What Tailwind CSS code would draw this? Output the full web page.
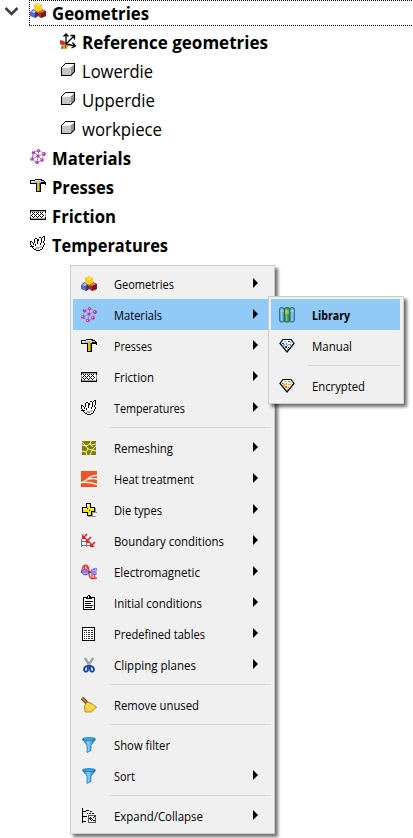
<!DOCTYPE html>
<html lang="en"><head><meta charset="utf-8"><title>Geometries</title>
<script src="https://cdn.jsdelivr.net/npm/@tailwindcss/browser@4"></script></head>
<body class="relative h-[838px] w-[413px] overflow-hidden bg-white font-['Open_Sans','Noto_Sans',sans-serif] text-black">
<svg class="absolute size-0">
<defs><linearGradient id="fg"><stop stop-color="#1277c5"/><stop offset=".45" stop-color="#7fd0ff"/><stop offset="1" stop-color="#075da8"/></linearGradient></defs>
<symbol id="geo" viewBox="0 0 16 16"><path d="M0 9l3-3 5 1v6l-3 2-5-2z" fill="#5968ce"/><path d="M1 9l3-2 3 1-3 2z" fill="#b5bff8"/><path d="M5 10l3-2v5l-3 2z" fill="#303779"/><path d="M8 8l4-2 4 2v5l-5 2-3-2z" fill="#b52a20"/><path d="M9 8l3-1 3 1-4 2z" fill="#ed8175"/><path d="M11 10l5-2v5l-5 2z" fill="#791b18"/><path d="M4 2l4-2 4 2v6L8 10 4 7z" fill="#f4bd12"/><path d="M5 2l3-1 3 1-3 2z" fill="#fff061"/><path d="M4 3l4 1 4-1v4L8 9 4 7z" fill="#ffcf20"/><path d="M4.500 7.500L8 9.500l4-2" fill="none" stroke="#906619"/></symbol>
<symbol id="mat" viewBox="0 0 16 16"><path d="M4 3l5-2 5 4-2 6-5 3-5-4zM4 3l4 4 6-2M8 7l-1 7M2 10l6-3 4 4M4 3l8 8M9 1L8 7M4 3L2 10" fill="none" stroke="#a294ab" stroke-width="1"/><g fill="#c72ccb"><circle cx="3.500" cy="3.500" r="1.700"/><circle cx="8.500" cy="1.700" r="1.600"/><circle cx="14" cy="5" r="1.900"/><circle cx="8" cy="7" r="1.600"/><circle cx="2" cy="10" r="1.800"/><circle cx="12" cy="11" r="1.800"/><circle cx="7" cy="13.500" r="1.800"/></g><path d="M3 2h1v1H3zM8 1h1v1H8zM13 4h1v1h-1zM1 9h1v1H1zM11 10h1v1h-1zM6 13h1v1H6z" fill="#f4a8f6"/></symbol>
<symbol id="press" viewBox="0 0 16 16" shape-rendering="crispEdges"><path d="M0 2h5V1h7v1h2v1h1v1h1v3h-1V6h-4v8H6V6H0z"/><path d="M1 3h4V2h6v1h3v1h-3v1H1z" fill="#b9bec2"/><path d="M5 2h5v1H5zM1 3h3v1H1z" fill="white"/><path d="M7 5h2v8H7z" fill="#e0c800"/><path d="M9 5h1v8H9z" fill="#8a7600"/></symbol>
<symbol id="fric" viewBox="0 0 16 16" shape-rendering="crispEdges"><path d="M0 3h16v10H0z" fill="#999"/><path d="M0 3h16v1H0zM0 12h16v1H0zM0 4h1v2H0zM15 4h1v2h-1zM0 10h1v2H0zM15 10h1v2h-1z"/><path d="M1 5h14v6H1z" fill="white"/><path d="M2 5h1v1H2zM4 5h1v1H4zM6 5h1v1H6zM8 5h1v1H8zM10 5h1v1h-1zM12 5h1v1h-1zM3 6h1v1H3zM7 6h1v1H7zM11 6h1v1h-1zM2 7h1v1H2zM4 7h1v1H4zM6 7h1v1H6zM8 7h1v1H8zM10 7h1v1h-1zM12 7h1v1h-1zM1 8h1v1H1zM5 8h1v1H5zM9 8h1v1H9zM13 8h1v1h-1zM2 9h1v1H2zM4 9h1v1H4zM6 9h1v1H6zM8 9h1v1H8zM10 9h1v1h-1zM12 9h1v1h-1zM3 10h1v1H3zM7 10h1v1H7zM11 10h1v1h-1z"/></symbol>
<symbol id="temp" viewBox="0 0 16 16" shape-rendering="crispEdges"><path d="M1 6h3V3h3l1 4 1-5h3V1h3v4l-1 5-2 3-4 2-4-2-3-4z" fill="white"/><path d="M0 5h2v1H0zM2 6h1v1H2zM0 6h1v3H0zM1 9h1v1H1zM3 7h1v2H3zM4 3h1v4H4zM5 2h2v1H5zM7 3h1v5H7zM8 3h1v2H8zM9 1h2v1H9zM11 2h1v5h-1zM10 7h1v2h-1zM12 1h1v1h-1zM13 0h2v1h-2zM14 1h1v4h-1zM13 5h1v2h-1zM14 7h1v2h-1zM13 9h1v2h-1zM12 11h1v2h-1zM10 13h2v1h-2zM6 14h4v1H6zM4 13h2v1H4zM2 11h1v1H2zM3 12h1v1H3zM0 10h4v1H0zM5 8h1v2H5z"/><path d="M6 11h5v1H6zM5 12h4v1H5zM10 10h2v1h-2z" fill="#aaa"/></symbol>
<symbol id="cube" viewBox="0 0 16 16" shape-rendering="crispEdges"><path d="M1 5l4-4h10v9l-4 4H1z" fill="#c5c5c5"/><path d="M2 5l4-3h8l-3 3z" fill="white"/><path d="M11 5l4-4v9l-4 4z" fill="#929292"/><path d="M1.500 5.500l4-4h9v8l-4 4h-9z" fill="none" stroke="#000"/><path d="M2 5h8" fill="none" stroke="#eee"/></symbol>
<symbol id="ref" viewBox="0 0 16 16"><path d="M0 7l4 1 4 5-2 3H1l1-4-2-1z" fill="#c93227"/><path d="M2 12l5-1v5H2z" fill="#d8ad17"/><path d="M2 13h1v2H2zM5 12h1v3H5z" fill="#7b4514"/><path d="M6 11V1M3.500 3.500L6 1l2.500 2.500M6 11l8-8M10.500 2.500h4v4M6 11l9 2M12.500 9.500l3 3.500-4 2" fill="none" stroke="#000" stroke-width="1.300"/></symbol>
<symbol id="remesh" viewBox="0 0 16 16"><path d="M1 1h14v14H1z" fill="#818000"/><path d="M1 5l4 1 4-2 1-3M1 2l4 4 2 3-2 3-4-1M5 12l1 3M7 9l4 1 4-4M9 4l3 3M11 10l4 1M11 10l-2 5M10 5l5-1" fill="none" stroke="#fff6c8" stroke-width="1"/></symbol>
<symbol id="heat" viewBox="0 0 16 16"><path d="M0 0h16v16H0z" fill="#ed5429"/><path d="M0 11.500C7 11 6 4 16 4.500M5 9q6-2 11-1M0 11.500q8-1 16 2" fill="none" stroke="#fff3ed" stroke-width="1.400"/></symbol>
<symbol id="die" viewBox="0 0 16 16" shape-rendering="crispEdges"><path d="M8 6h7v4h1v1h-4v3h3v1H7v-4h1z" fill="#999"/><path d="M5 1h5v4h4v5h-3v4H6v-3H1V5h4z"/><path d="M6 2h3v4h4v3h-3v4H7v-3H2V6h4z" fill="#f0e419"/><path d="M6 2h2v2H6zM2 6h4v1H2zM10 6h3v1h-3z" fill="#ffff85"/><path d="M6 6h1v1H6zM8 8h1v1H8z"/></symbol>
<symbol id="bound" viewBox="0 0 16 16"><path d="M.5 6v8M5.500 8v6M9.500 10v4M0 8.500h6M0 12.500h11" fill="none" stroke="#777"/><path d="M6 1L2 5M10 4L6 8M14 9l-4 4" stroke="#e51c23" stroke-width="1.600"/><path d="M1 1l5 5H1zM5 5l5 5H5zM9 9l5 5H9z" fill="#f21c24"/></symbol>
<symbol id="em" viewBox="0 0 16 16"><path d="M0 8V7q4-3 8 0v2q-4 4-8-1zM9 8q4-4 7-3v5q-4 0-7-2z" fill="#b8b7ff"/><path d="M0 8q3-4 7-1l3 2q3 2 6 1M0 8q4 5 8 1 3-5 8-4" fill="none" stroke="#1b1bef" stroke-dasharray="2 .5"/><path d="M1 7C1-1 8-1 8 8c0 8 3 7 8 6M3.500 2v4M6 2v4M11 10v4M13.500 10v4" fill="none" stroke="#f01f27" stroke-width="1.200"/><path d="M1 8h14" stroke="#303060" stroke-width=".7"/></symbol>
<symbol id="init" viewBox="0 0 16 16" shape-rendering="crispEdges"><path d="M2.500 2.500h11v12h-11z" fill="#f8f8f8" stroke="#000"/><path d="M5 2h1V1h1V0h2v1h1v1h1v2H5zM4 6h8v1H4zM4 8h6v1H4zM4 10h8v1H4zM4 12h7v1H4z"/><path d="M7 1h1v2H7z" fill="white"/></symbol>
<symbol id="table" viewBox="0 0 16 16" shape-rendering="crispEdges"><path d="M1.500 1.500h12v13h-12z" fill="white" stroke="#000"/><path d="M3 4.500h3M7 4.500h2M10 4.500h2M3 6.500h1M5 6.500h1M7 6.500h2M10 6.500h2M3 8.500h1M5 8.500h1M7 8.500h2M10 8.500h2M3 10.500h1M5 10.500h1M7 10.500h2M10 10.500h2M3 12.500h1M5 12.500h1M7 12.500h2M10 12.500h2" stroke="#333"/></symbol>
<symbol id="scis" viewBox="0 0 16 16"><path d="M4 1l5 8M12 1L7 9" stroke="#747c84" stroke-width="2"/><path d="M4 1l5 8M12 1L7 9" stroke="#c8d0d7" stroke-width=".7"/><path d="M7 9q-3 0-4 3c0 4 4 3 4 0zM9 9q3 0 4 3c0 4-4 3-4 0z" fill="none" stroke="#1746af" stroke-width="1.900"/></symbol>
<symbol id="broom" viewBox="0 0 16 16"><path d="M1 1l5 5" stroke="#7b431d" stroke-width="3.500"/><path d="M1 1l4 4" stroke="#cc8847" stroke-width="1.300"/><path d="M6 5l4 1 5.500 4-5 5H4L3.500 9z" fill="#f7cf34" stroke="#ad7a12" stroke-width=".8"/><path d="M6 6l4 4M5 8l4 5M8 13l5-4" stroke="#fff27b"/></symbol>
<symbol id="filter" viewBox="0 0 16 16"><path d="M1.500 2.500L6 8v7.500l4-2V8l4.500-5.500z" fill="url(#fg)" stroke="#176bac" stroke-width=".7"/><ellipse cx="8" cy="2" rx="6.500" ry="1.300" fill="#55aee8" stroke="#1478bf"/></symbol>
<symbol id="expand" viewBox="0 0 16 16" shape-rendering="crispEdges"><path d="M1 0h1v15H1zM2 3h3v1H2zM2 8h4v1H2zM2 13h3v1H2zM5 2h3v1H5zM9 3h2v1H9zM6 5h1v1H6zM8 5h2v1H8zM11 5h2v1h-2z"/><path d="M7.500 7.500h7v7h-7z" fill="#eee" stroke="#555"/><path d="M9 9h1v3H9zM8 10h3v1H8zM13 8h1v1h-1zM12 9h1v1h-1zM11 11h1v1h-1zM10 12h1v1h-1zM12 12h2v1h-2z"/></symbol>
<symbol id="lib" viewBox="0 0 16 16"><g stroke="#215f99"><rect x=".7" y=".7" width="4.300" height="14.300" rx="1.300" fill="#6fb7dc"/><rect x="11" y=".7" width="4.300" height="14.300" rx="1.300" fill="#6fb7dc"/><rect x="5.500" y=".7" width="5" height="14.300" rx="1" fill="#43945a" stroke="#28713f"/></g><path d="M2.500 3v10M13 3v10" stroke="#8fd0ec"/><path d="M7.500 2v12" stroke="#85c774" stroke-width="1.300"/><path d="M1 4h4M6 4h4M11 4h4M6 6h4" stroke="#d2d777"/></symbol>
<symbol id="gem" viewBox="0 0 16 16"><path d="M4 1.500h8l3 4-7 8.500-7-8.500z" fill="white" stroke="#000" stroke-width="1.200"/><g shape-rendering="crispEdges"><path d="M5 3h2v1H5zM9 6h3v1H9zM4 6h2v2H4zM8 10h1v2H8zM11 4h1v1h-1z" fill="#18cff8"/><path d="M9 3h2v1H9zM3 5h2v1H3zM6 8h2v2H6zM9 9h1v1H9z" fill="#2626d8"/><path d="M7 5h1v2H7zM11 7h1v1h-1zM8 7h1v1H8z" fill="#e72cd0"/><path d="M12 5h1v1h-1zM5 8h1v1H5zM9 8h1v1H9z" fill="#eddb22"/></g></symbol>
<symbol id="gem2" viewBox="0 0 16 16"><path d="M4 1.500h8l3 4-7 8.500-7-8.500z" fill="#fffaf0" stroke="#000" stroke-width="1.200"/><g shape-rendering="crispEdges"><path d="M5 3h2v1H5zM9 6h3v1H9zM4 6h2v2H4zM8 10h1v2H8zM11 4h1v1h-1z" fill="#f8a62a"/><path d="M9 3h2v1H9zM3 5h2v1H3zM6 8h2v2H6zM9 9h1v1H9zM7 5h1v2H7z" fill="#e75a36"/><path d="M12 5h1v1h-1zM5 8h1v1H5zM9 8h1v1H9z" fill="#f5ca3b"/></g></symbol>
<symbol id="arr" viewBox="0 0 5 10"><path d="M0 0l5 5-5 5z"/></symbol>
</svg>
<main id="tree" class="-mt-px flex flex-col"></main>
<nav id="menu" class="absolute left-[70px] top-[265px] h-[569px] w-[205px] border border-[#ccc] bg-[#f0f0f0] py-0.5 pl-0.5 pr-[3px] shadow-[3px_3px_3px_rgba(0,0,0,0.55)]"></nav>
<nav id="sub" class="absolute left-[268px] top-[296px] h-[108px] w-[136px] border border-[#ccc] bg-[#f0f0f0] py-0.5 pl-0.5 pr-[3px] shadow-[3px_3px_3px_rgba(0,0,0,0.55)]"></nav>
<script>
const icon=(n,c)=>`<svg class="size-4 shrink-0 ${c}"><use href="#${n}"/></svg>`;
const label=(t,w,bold,size)=>`<svg class="h-6 shrink-0 overflow-visible" style="width:${w}px"><text x="0" y="${size==='l'?17.5:16.5}" textLength="${w}" lengthAdjust="spacingAndGlyphs" class="${size==='l'?'text-[18px]':'text-[12px]'} ${bold?'font-bold':''}">${t}</text></svg>`;
document.getElementById('tree').innerHTML=[
['geo','Geometries',97,1,0],['ref','Reference geometries',186,1,1],['cube','Lowerdie',71,0,1],['cube','Upperdie',73,0,1],['cube','workpiece',80,0,1],['mat','Materials',79,1,0],['press','Presses',62,1,0],['fric','Friction',64,1,0],['temp','Temperatures',116,1,0]
].map(([i,t,w,b,n],k)=>k===0?`<div class="flex h-[29px] items-center"><svg class="mb-[6px] ml-1 mr-2.5 h-4 w-[15px]" viewBox="0 0 15 16"><path d="M1.500 5l6 6 6-6" fill="none" stroke="#404040" stroke-width="2.600"/></svg><div class="relative flex h-[27px] flex-1 items-center gap-[6px] pl-px"><svg class="absolute inset-0 h-full w-full"><path d="M0 .5h384M0 25.500h384M.5 0v26" fill="none" stroke="#000" stroke-dasharray="1 1"/></svg>${icon(i,'mb-[5px]')}${label(t,w,b,'l')}</div></div>`:
`<div class="flex h-[29px] items-center gap-[6px] ${n?'pl-[60px]':'pl-[30px]'}">${icon(i,'mb-[3px]')}${label(t,w,b,'l')}</div>`).join('');
const row=([i,t,w,a,sel,b])=>i?`<div class="flex h-[31px] items-center pl-2 ${sel?'bg-[#91c9f7]':''}">${icon(i,'mt-px')}<span class="ml-[17px]">${label(t,w,b,'s')}</span>${a?'<svg class="mb-px ml-auto mr-[13px] h-2.5 w-[5px]"><use href="#arr"/></svg>':''}</div>`:'<div class="flex h-[9px] items-center pl-[37px]"><div class="h-px w-full bg-[#d5d5d5]"></div></div>';
document.getElementById('menu').innerHTML=[
['geo','Geometries',60,1],['mat','Materials',48,1,1],['press','Presses',38,1],['fric','Friction',40,1],['temp','Temperatures',71,1],[],
['remesh','Remeshing',59,1],['heat','Heat treatment',80,1],['die','Die types',48,1],['bound','Boundary conditions',110,1],['em','Electromagnetic',86,1],['init','Initial conditions',88,1],['table','Predefined tables',91,1],['scis','Clipping planes',82,1],[],
['broom','Remove unused',85,0],[],['filter','Show filter',56,0],['filter','Sort',21,1],[],['expand','Expand/Collapse',89,1]].map(row).join('');
document.getElementById('sub').innerHTML=[['lib','Library',38,0,1,1],['gem','Manual',40,0],[],['gem2','Encrypted',53,0]].map(row).join('');
</script></body></html>
